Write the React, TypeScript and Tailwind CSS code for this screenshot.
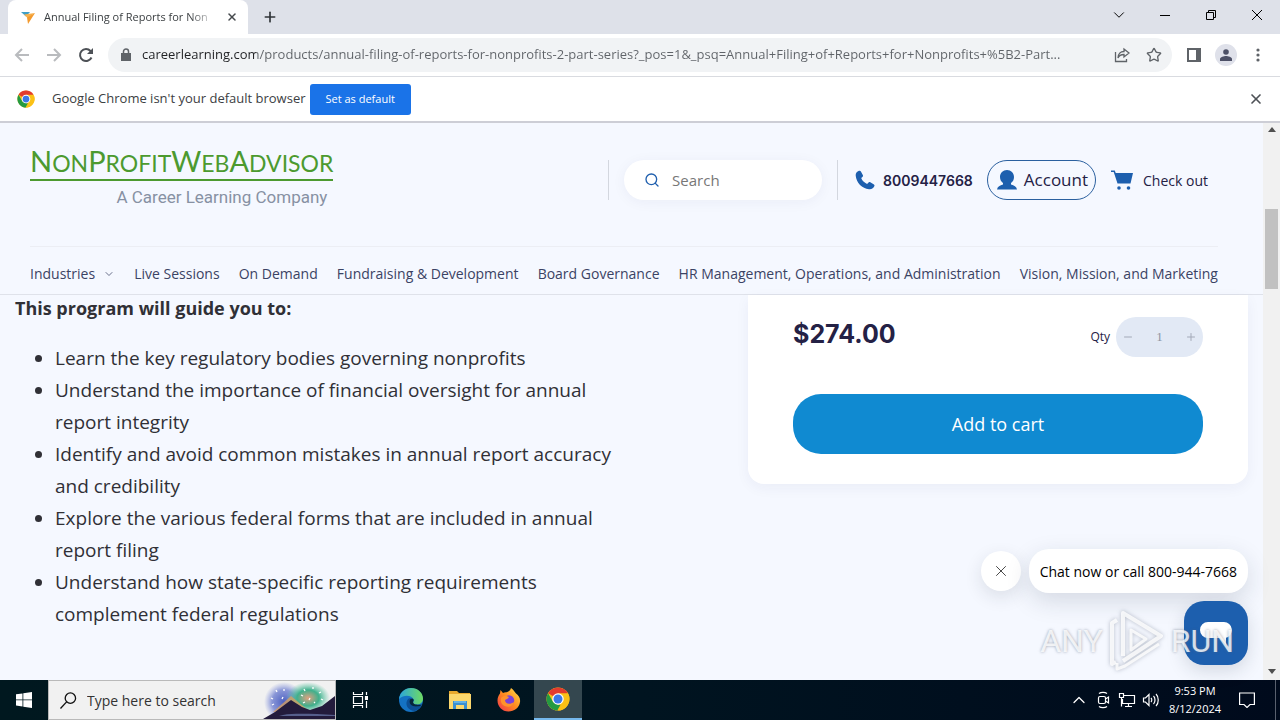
import { useState } from "react";
import type { ReactNode } from "react";
import { Search, X, ChevronDown, ChevronUp, Plus, Minus, Star } from "lucide-react";

const NAV_LINKS = [
  "Live Sessions",
  "On Demand",
  "Fundraising & Development",
  "Board Governance",
  "HR Management, Operations, and Administration",
  "Vision, Mission, and Marketing",
];

const GOALS = [
  "Learn the key regulatory bodies governing nonprofits",
  "Understand the importance of financial oversight for annual report integrity",
  "Identify and avoid common mistakes in annual report accuracy and credibility",
  "Explore the various federal forms that are included in annual report filing",
  "Understand how state-specific reporting requirements complement federal regulations",
];

const PAGE_URL =
  "careerlearning.com/products/annual-filing-of-reports-for-nonprofits-2-part-series?_pos=1&_psq=Annual+Filing+of+Reports+for+Nonprofits+%5B2-Part...";

function ChromeLogo({ className }: { className: string }) {
  return (
    <svg viewBox="0 0 48 48" className={className}>
      <circle cx="24" cy="24" r="23" fill="#fbc116" />
      <path d="M24 24 4.1 12.5A23 23 0 0 1 43.9 12.5Z" fill="#e33b2e" />
      <path d="M24 12.5h19.9A23 23 0 0 1 24 47l10-17.3Z" fill="#fbc116" />
      <path d="M4.1 12.5 14 29.7 24 35.500h5L22.500 47A23 23 0 0 1 4.100 12.500Z" fill="#249a41" />
      <circle cx="24" cy="24" r="11.5" fill="#fff" />
      <circle cx="24" cy="24" r="9" fill="#3b78e7" />
    </svg>
  );
}

function TabStrip() {
  return (
    <div className="flex h-[34px] items-stretch bg-[#dee1e9]">
      <div className="ml-2 flex w-60 items-center rounded-t-lg bg-white pl-3 pr-2">
        <svg viewBox="0 0 16 16" className="size-4 shrink-0">
          <path d="M1 3h9L6 7.500z" fill="#3f9fc6" />
          <path d="M15 4 4 5.500 7.500 9z" fill="#f6b04c" />
          <path d="M15 4 7 8.500 8 15z" fill="#f39a2e" />
        </svg>
        <span className="ml-2 flex-1 overflow-hidden whitespace-nowrap text-[11px] text-[#3c4043] [mask-image:linear-gradient(to_right,black_85%,transparent)]">
          Annual Filing of Reports for Non
        </span>
        <button aria-label="Close tab" className="ml-2 grid size-4 place-items-center text-[#45494d]">
          <X size={12} strokeWidth={3} />
        </button>
      </div>
      <button aria-label="New tab" className="ml-2 grid w-7 place-items-center text-[#303438]">
        <Plus size={16} strokeWidth={2.500} />
      </button>
      <div className="ml-auto flex text-black">
        <button aria-label="Search tabs" className="grid w-[46px] place-items-center pb-1">
          <ChevronDown size={18} strokeWidth={1.300} />
        </button>
        <button aria-label="Minimize" className="grid w-[46px] place-items-center pb-1">
          <svg viewBox="0 0 10 10" className="size-2.5" stroke="currentColor"><path d="M0 5.500h10" /></svg>
        </button>
        <button aria-label="Restore" className="grid w-[46px] place-items-center pb-1">
          <svg viewBox="0 0 10 10" className="size-2.5" fill="none" stroke="currentColor">
            <path d="M.5 2.500h7v7h-7zM2.500 2.500v-2h7v7h-2" />
          </svg>
        </button>
        <button aria-label="Close" className="grid w-[46px] place-items-center pb-1">
          <svg viewBox="0 0 10 10" className="size-2.5" stroke="currentColor"><path d="m0 0 10 10M10 0 0 10" /></svg>
        </button>
      </div>
    </div>
  );
}

function ToolButton({ label, children }: { label: string; children: ReactNode }) {
  return (
    <button aria-label={label} className="grid size-8 shrink-0 place-items-center text-[#5f6368]">
      {children}
    </button>
  );
}

function Toolbar() {
  return (
    <div className="flex h-[43px] items-center border-b border-[#d9dbe0] bg-white pl-1.5 pr-1.5">
      <ToolButton label="Back">
        <svg viewBox="0 0 16 16" className="size-4" fill="none" stroke="#b9bbbe" strokeWidth="2"><path d="M15 8H2M8 2 2 8l6 6" /></svg>
      </ToolButton>
      <ToolButton label="Forward">
        <svg viewBox="0 0 16 16" className="size-4" fill="none" stroke="#b9bbbe" strokeWidth="2"><path d="M1 8h13M8 2l6 6-6 6" /></svg>
      </ToolButton>
      <ToolButton label="Reload">
        <svg viewBox="0 0 16 16" className="size-4" fill="none" stroke="#4d5156" strokeWidth="2">
          <path d="M13.500 10.500A6 6 0 1 1 12.500 4L14 5.500" />
          <path d="M15 1v6H9z" fill="#4d5156" stroke="none" />
        </svg>
      </ToolButton>
      <div className="ml-1.5 mr-1.5 flex h-[34px] flex-1 items-center rounded-full bg-[#f1f3f5] pl-[11px] pr-0.5">
        <svg viewBox="0 0 12 14" className="size-3.5" fill="#5f6368">
          <path d="M1 5h10v8H1z" />
          <path d="M3.500 6V3.500a2.500 2.500 0 0 1 5 0V6" fill="none" stroke="#5f6368" strokeWidth="1.500" />
        </svg>
        <input
          aria-label="Address and search bar"
          defaultValue={PAGE_URL}
          className="ml-[9px] min-w-0 flex-1 bg-linear-to-r from-[#202124] from-[114px] to-[#5f6368] to-[114px] bg-clip-text text-[13px] text-transparent outline-none"
        />
        <ToolButton label="Share this page">
          <svg viewBox="0 0 16 16" className="size-4" fill="none" stroke="currentColor" strokeWidth="1.300">
            <path d="M1.500 5v9.500h11V12M10 2l5 4-5 4V7.500c-3 0-5 1-6 3.500 0-4 2.500-6.500 6-6.500z" />
          </svg>
        </ToolButton>
        <ToolButton label="Bookmark this tab">
          <Star size={16} />
        </ToolButton>
      </div>
      <ToolButton label="Side panel">
        <svg viewBox="0 0 14 14" className="size-3.5"><path d="M1 1h12v12H1z" fill="none" stroke="currentColor" strokeWidth="2" /><path d="M9 1h4v12H9z" fill="currentColor" /></svg>
      </ToolButton>
      <ToolButton label="Profile">
        <span className="grid size-[22px] place-items-center rounded-full bg-[#dfe1ea]">
          <svg viewBox="0 0 12 12" className="size-3" fill="#4c5066"><circle cx="6" cy="3" r="2.800" /><path d="M0 12v-2c0-2 4-3 6-3s6 1 6 3v2z" /></svg>
        </span>
      </ToolButton>
      <ToolButton label="Menu">
        <svg viewBox="0 0 4 14" className="h-3.5 w-1" fill="currentColor">
          <circle cx="2" cy="2" r="1.600" /><circle cx="2" cy="7" r="1.600" /><circle cx="2" cy="12" r="1.600" />
        </svg>
      </ToolButton>
    </div>
  );
}

function InfoBar() {
  return (
    <div className="flex h-[46px] items-center border-b-2 border-[#cdced6] bg-white pl-[17px] pr-4">
      <ChromeLogo className="size-[18px]" />
      <span className="ml-[17px] text-[13px] text-[#3c4043]">Google Chrome isn't your default browser</span>
      <button className="ml-1 h-[31px] rounded-[3px] bg-[#1a73e8] px-4 text-[11px] text-white">Set as default</button>
      <button aria-label="Dismiss" className="ml-auto text-[#4d5156]">
        <X size={16} strokeWidth={2.500} />
      </button>
    </div>
  );
}

function SiteHeader() {
  return (
    <header className="border-b border-[#dfe2ea] bg-[#f5f8ff] pl-[30px] pr-[45px] text-[#242145]">
      <div className="flex h-[124px] items-start justify-between border-b border-[#eceef4]">
        <a href="#" className="mt-[22px] flex flex-col items-end font-[Lato]">
          <span className="border-b-2 border-[#4c9a2f] text-[29px] leading-[32px] text-[#4c9a2f]">
            N<span className="text-[23px]">ON</span>P<span className="text-[23px]">ROFIT</span>W
            <span className="text-[23px]">EB</span>A<span className="text-[23px]">DVISOR</span>
          </span>
          <span className="mr-1.5 font-[Roboto] text-[17px] leading-[32px] text-[#8791a3]">A Career Learning Company</span>
        </a>

        <div className="mt-[37px] flex h-10 items-center pr-2.5">
          <label className="flex h-10 items-center border-l border-[#d3d7df] pl-[15px] pr-[15px]">
            <span className="flex h-10 w-[198px] items-center rounded-full bg-white pl-5 pr-4 shadow-[0_2px_14px_rgba(40,30,90,0.05)]">
              <Search size={16} className="shrink-0 text-[#1f5fae]" />
              <input
                aria-label="Search"
                placeholder="Search"
                className="ml-3 w-full min-w-0 text-[15px] outline-none placeholder:text-[#777]"
              />
            </span>
          </label>
          <a href="#" className="flex h-10 items-center border-l border-[#d3d7df] pl-[17px] font-[Inter] text-[14px] font-semibold">
            <svg viewBox="0 0 20 20" className="mr-2 size-5" fill="#1d5fae">
              <path d="M4 .8C2 1.600.4 3 .7 5.800 1.500 13 7 18.500 14 19.300c2.800.3 4.700-1.200 5.400-3.200.3-.9 0-1.400-.8-1.900l-3.300-1.900c-.8-.4-1.400-.3-2 .4l-1.200 1.200c-2.800-1-4.900-3.100-5.900-5.800l1.200-1.200c.7-.6.8-1.200.4-2L5.900 1.500C5.500.8 4.900.5 4 .8z" />
            </svg>
            8009447668
          </a>
          <a href="#" className="ml-3.5 flex h-10 items-center rounded-full border border-[#2b609f] pl-2 pr-[7px] text-[17px]">
            <svg viewBox="0 0 22 20" className="mr-1.5 h-5 w-[22px]" fill="#1d5fae">
              <path d="M11 0c4 0 7 3 7 7 0 2.500-1 4.500-3 6v1.500c3 .8 5.500 2 6 5H1c.5-3 3-4.200 6-5V13c-2-1.500-3-3.500-3-6 0-4 3-7 7-7z" />
            </svg>
            Account
          </a>
          <a href="#" className="ml-[15px] flex items-center text-[14px]">
            <svg viewBox="0 0 22 20" className="mr-2.5 h-5 w-[22px]" fill="#1d5fae">
              <path d="M0 .5h3.800L4.700 3H22l-2.500 10.500H6.500L2.700 2H0z" />
              <circle cx="8" cy="18" r="1.800" />
              <circle cx="17.500" cy="18" r="1.800" />
            </svg>
            Check out
          </a>
        </div>
      </div>

      <nav className="flex h-[47px] items-center justify-between whitespace-nowrap pt-1.5 text-[14px] text-[#3b4364]">
        <a href="#" className="flex items-center gap-2">
          Industries <ChevronDown size={12} strokeWidth={1.500} />
        </a>
        {NAV_LINKS.map((link) => (
          <a key={link} href="#">{link}</a>
        ))}
      </nav>
    </header>
  );
}

function BuyBox() {
  const [qty, setQty] = useState(1);

  return (
    <aside className="h-[189px] w-[500px] rounded-b-2xl bg-white px-[45px] pt-[22px] text-[#242145] shadow-[0_4px_14px_rgba(40,30,90,0.05)]">
      <div className="flex h-10 items-center justify-between">
        <p className="pb-1 font-[Inter] text-[25px] font-bold">${(274 * qty).toFixed(2)}</p>
        <div className="flex items-center">
          <label htmlFor="qty" className="mr-1.5 text-[12px]">Qty</label>
          <div className="flex h-10 w-[87px] items-center rounded-full bg-[#e2e9f5] px-1.5 text-[#a3a9b8]">
            <button aria-label="Decrease quantity" onClick={() => setQty(Math.max(1, qty - 1))}>
              <Minus size={12} />
            </button>
            <input
              id="qty"
              value={qty}
              onChange={(e) => setQty(Number(e.target.value) || 1)}
              className="w-full min-w-0 text-center font-['Liberation_Serif'] text-[13px] text-[#8d93a3] outline-none"
            />
            <button aria-label="Increase quantity" onClick={() => setQty(qty + 1)}>
              <Plus size={12} />
            </button>
          </div>
        </div>
      </div>
      <button className="mt-[37px] h-[60px] w-full rounded-[28px] bg-[#108ad1] text-[18px] text-white">
        Add to cart
      </button>
    </aside>
  );
}

function ScrollBar() {
  return (
    <div className="flex w-[17px] shrink-0 flex-col items-center bg-[#f1f1f1] pb-1.5 pt-1">
      <svg viewBox="0 0 8 5" className="h-[5px] w-2 shrink-0" fill="#505050"><path d="m0 5 4-5 4 5z" /></svg>
      <div className="mt-[77px] h-20 w-[13px] bg-[#c1c1c1]" />
      <svg viewBox="0 0 8 5" className="mt-auto h-[5px] w-2 shrink-0" fill="#505050"><path d="m0 0 4 5 4-5z" /></svg>
    </div>
  );
}

function ChatWidget() {
  return (
    <div className="absolute bottom-[15px] right-8 flex flex-col items-end gap-2">
      <div className="flex items-center gap-2">
        <button aria-label="Close message" className="grid size-10 place-items-center rounded-full bg-white text-[#444] shadow-[0_6px_18px_rgba(30,40,60,0.12)]">
          <X size={18} strokeWidth={1.300} />
        </button>
        <button className="h-11 rounded-[20px] bg-white px-[11px] text-[14px] text-black shadow-[0_8px_24px_rgba(30,40,60,0.15)]">
          Chat now or call 800-944-7668
        </button>
      </div>
      <button aria-label="Open chat" className="grid size-16 place-items-center rounded-[20px] bg-[#1d5fae] shadow-[0_6px_18px_rgba(30,40,60,0.15)]">
        <svg viewBox="0 0 32 24" className="h-6 w-8" fill="#fff">
          <path d="M8 1h16a8 8 0 0 1 2 15.700V24l-6-7H8A8 8 0 0 1 8 1z" />
        </svg>
      </button>
    </div>
  );
}

function Watermark() {
  return (
    <div className="pointer-events-none absolute bottom-2 right-[46px] flex items-center gap-1.5 font-[Roboto] text-[32px] text-white/80 [text-shadow:0_0_3px_rgba(90,100,120,0.6)]">
      <span>ANY</span>
      <svg viewBox="0 0 56 62" className="h-[62px] w-14 drop-shadow-[0_0_2px_rgba(90,100,120,0.5)]" fill="none" stroke="#fff" strokeOpacity="0.8" strokeWidth="4" strokeLinejoin="round">
        <path d="M14 46V3l38 23-38 25" />
        <path d="M8 10 3 13v41l4-2" />
        <path d="M8 53v6l8-3 34-22M22 20v20l15-11z" strokeWidth="3" />
      </svg>
      <span>RUN</span>
    </div>
  );
}

function TaskButton({ label, active, children }: { label: string; active?: boolean; children: ReactNode }) {
  return (
    <button
      aria-label={label}
      className={`grid h-10 w-12 place-items-center ${active ? "border-b-2 border-[#76b9ed] bg-[#34474f]" : ""}`}
    >
      {children}
    </button>
  );
}

function Taskbar() {
  return (
    <footer className="flex h-10 shrink-0 items-center bg-linear-to-r from-[#00181f] via-[#001420] to-[#000a1c] text-white">
      <TaskButton label="Start">
        <svg viewBox="0 0 16 16" className="size-4" fill="#fff">
          <path d="M0 2.300 6.500 1.400v6.100H0zM7.300 1.300 16 0v7.500H7.300zM0 8.300h6.500v6.200L0 13.600zM7.300 8.300H16V16l-8.700-1.300z" />
        </svg>
      </TaskButton>
      <label className="flex h-10 w-72 items-center border border-[#b9b9b9] bg-[#f1f1f1] pl-[11px]">
        <svg viewBox="0 0 18 18" className="size-[17px] shrink-0" fill="none" stroke="#111" strokeWidth="1.400">
          <circle cx="11" cy="6.500" r="5.500" /><path d="m7 10.500-6.500 7" />
        </svg>
        <input
          aria-label="Type here to search"
          placeholder="Type here to search"
          className="ml-2.5 min-w-0 flex-1 text-[14px] outline-none placeholder:text-[#333]"
        />
        <svg viewBox="0 0 72 38" className="h-[38px] w-[72px] shrink-0">
          <defs>
            <radialGradient id="burstBlue"><stop offset="0" stopColor="#4b5fc0" /><stop offset=".6" stopColor="#6f7fd0" stopOpacity=".8" /><stop offset="1" stopColor="#8b9ae0" stopOpacity="0" /></radialGradient>
            <radialGradient id="burstGreen"><stop offset="0" stopColor="#e0a080" /><stop offset=".5" stopColor="#3fb08c" /><stop offset="1" stopColor="#62c9a6" stopOpacity="0" /></radialGradient>
          </defs>
          <circle cx="21" cy="21" r="20" fill="url(#burstBlue)" />
          <ellipse cx="45" cy="17" rx="22" ry="16" fill="url(#burstGreen)" />
          <path d="M10 31 28 15l18 15z" fill="#d9a05c" opacity=".75" />
          <path d="M0 38 12 31l16-12 11 7 8 3 12-4 13-10v23z" fill="#231b3c" />
          <path d="M20 34c12-2 30-1 52 0v1H16z" fill="#565f8c" />
          <path d="m8 17 2 1M13 9l1 2M21 8v2M9 24l2-1M19 18l1-2M38 14l2 1M41 8l1 2M50 6v2M58 11l-2 1M60 19l-2-1M47 17l-1 2M40 22l2-1M52 22l-1-1" fill="none" stroke="#fff" strokeWidth="1.300" />
        </svg>
      </label>
      <TaskButton label="Task View">
        <svg viewBox="0 0 16 16" className="size-4" fill="none" stroke="#fff" strokeWidth="1.200">
          <path d="M1.500 4.500h9v7h-9zM1.500 0v2.500h9V0M1.500 16v-2.500h9V16M14.500 0v3M14.500 9v7" />
          <path d="M13.500 4.500h2v3h-2z" fill="#fff" />
        </svg>
      </TaskButton>
      <div className="ml-[3px] flex gap-px">
        <TaskButton label="Microsoft Edge">
          <svg viewBox="0 0 24 24" className="size-6">
            <defs>
              <linearGradient id="edgeTop" x1="0" x2="1"><stop offset="0" stopColor="#2aa5dc" /><stop offset="1" stopColor="#6fdb62" /></linearGradient>
            </defs>
            <circle cx="12" cy="12" r="12" fill="#1472c4" />
            <path d="M0 11C1 4 6 0 12 0c7 0 12 5 12 10.500 0 4-3 6-6.500 6-2.500 0-4-1-3.500-2 .8-1 1-2 .6-3C13 7 5 6 0 11z" fill="url(#edgeTop)" />
            <path d="M9 11c-4 5 0 12 7 12 3-1 6-4 7-6-4 2-9 2-11-1-1-2-.5-4 0-5.500C11 10 10 10 9 11z" fill="#0c4f95" />
            <path d="M14.600 11.500c-1-2-4-1-4 2 0 4 4 5 7 5 3 0 4.500-1 5.500-2-4 .5-9 .5-9-2.500 0-1 1-1.500.5-2.500z" fill="#06263c" />
          </svg>
        </TaskButton>
        <TaskButton label="File Explorer">
          <svg viewBox="0 0 22 20" className="h-5 w-[22px]">
            <path d="M0 1h8l2 2h11v5H0z" fill="#e8a92e" />
            <path d="M0 4h22v15H0z" fill="#fbd76d" />
            <path d="M4 19v-8h14v8h-3v-4H7v4z" fill="#3b8fd0" />
            <path d="M5 11h12v2H5z" fill="#62b1e6" />
          </svg>
        </TaskButton>
        <TaskButton label="Firefox">
          <svg viewBox="0 0 24 24" className="size-6">
            <defs>
              <linearGradient id="foxBody" x1="1" x2="0" y1="0" y2="1"><stop offset="0" stopColor="#ffe14a" /><stop offset=".5" stopColor="#ff8a1f" /><stop offset="1" stopColor="#f0304f" /></linearGradient>
            </defs>
            <path d="M14 0c3 2 3.500 4 5 5.500 3 2 4.500 5 4 8.500-.8 6-6 9.500-11.500 9.500C5 23.500.5 18.500.5 12.500c0-3 1-5 2.500-7L3.500 2l2.500 3c1-.5 2-.8 3.500-.7C11 4 13 3 14 0z" fill="url(#foxBody)" />
            <circle cx="12" cy="12.500" r="5.200" fill="#7a42d8" />
            <path d="M4 10c3-3 6-2 8-1-1 2-3 2-4 3 0 4 5 5 9 2-1 5-7 6-11 3-2-2-2.500-4-2-7z" fill="#ff922b" />
          </svg>
        </TaskButton>
        <TaskButton label="Google Chrome" active>
          <ChromeLogo className="size-6" />
        </TaskButton>
      </div>

      <div className="ml-auto flex h-10 items-center">
        <button aria-label="Show hidden icons" className="grid w-6 place-items-center">
          <ChevronUp size={20} strokeWidth={1.500} />
        </button>
        <svg viewBox="0 0 24 18" className="h-[18px] w-6" fill="none" stroke="#fff" strokeWidth="1.200">
          <rect x="7.500" y="5.500" width="7" height="7" rx="1.500" />
          <path d="m14.500 8 3-2v6l-3-2M8 2.500c2-1.500 6-1.500 8 0M8 15.500c2 1.500 6 1.500 8 0" />
        </svg>
        <svg viewBox="0 0 24 18" className="h-[18px] w-6" fill="none" stroke="#fff" strokeWidth="1.200">
          <path d="M9 4.500h10.500v8H7.500V8M13.500 12.500v3M10 15.500h7M4.500 2.500h4v4h-4zM6.500 6.500v9" />
        </svg>
        <svg viewBox="0 0 24 18" className="h-[18px] w-6" fill="none" stroke="#fff" strokeWidth="1.200">
          <path d="M4.500 7h2L10 3.500v11L6.500 11h-2zM12 7c1 1 1 3 0 4M14.500 5c2 2 2 6 0 8M17 3c3 3 3 9 0 12" />
        </svg>
        <div className="w-16 text-center text-[11px] leading-[18px]">
          <div>9:53 PM</div>
          <div>8/12/2024</div>
        </div>
        <button aria-label="Notifications" className="ml-0.5 grid w-9 place-items-center">
          <svg viewBox="0 0 16 16" className="size-4" fill="none" stroke="#fff" strokeWidth="1.200">
            <path d="M.6 1h14.800v11.500H11L8 15.500l-3-3H.6z" />
          </svg>
        </button>
        <div className="ml-2.5 mr-1 h-10 w-px bg-[#59606e]" />
      </div>
    </footer>
  );
}

export default function App() {
  return (
    <div className="flex h-screen flex-col overflow-hidden font-['Open_Sans',sans-serif]">
      <TabStrip />
      <Toolbar />
      <InfoBar />

      <div className="relative flex min-h-0 flex-1 bg-[#f5f8ff]">
        <div className="min-w-0 flex-1 overflow-hidden">
          <SiteHeader />
          <main className="flex items-start justify-between pl-[15px] pr-[15px]">
            <section className="w-[625px] text-[19px] text-[#303036]">
              <h2 className="text-[18px] font-bold leading-[26px]">This program will guide you to:</h2>
              <ul className="mt-[21px] list-disc pl-10 leading-8">
                {GOALS.map((goal) => (
                  <li key={goal}>{goal}</li>
                ))}
              </ul>
            </section>
            <BuyBox />
          </main>
        </div>
        <ScrollBar />
        <ChatWidget />
        <Watermark />
      </div>

      <Taskbar />
    </div>
  );
}
